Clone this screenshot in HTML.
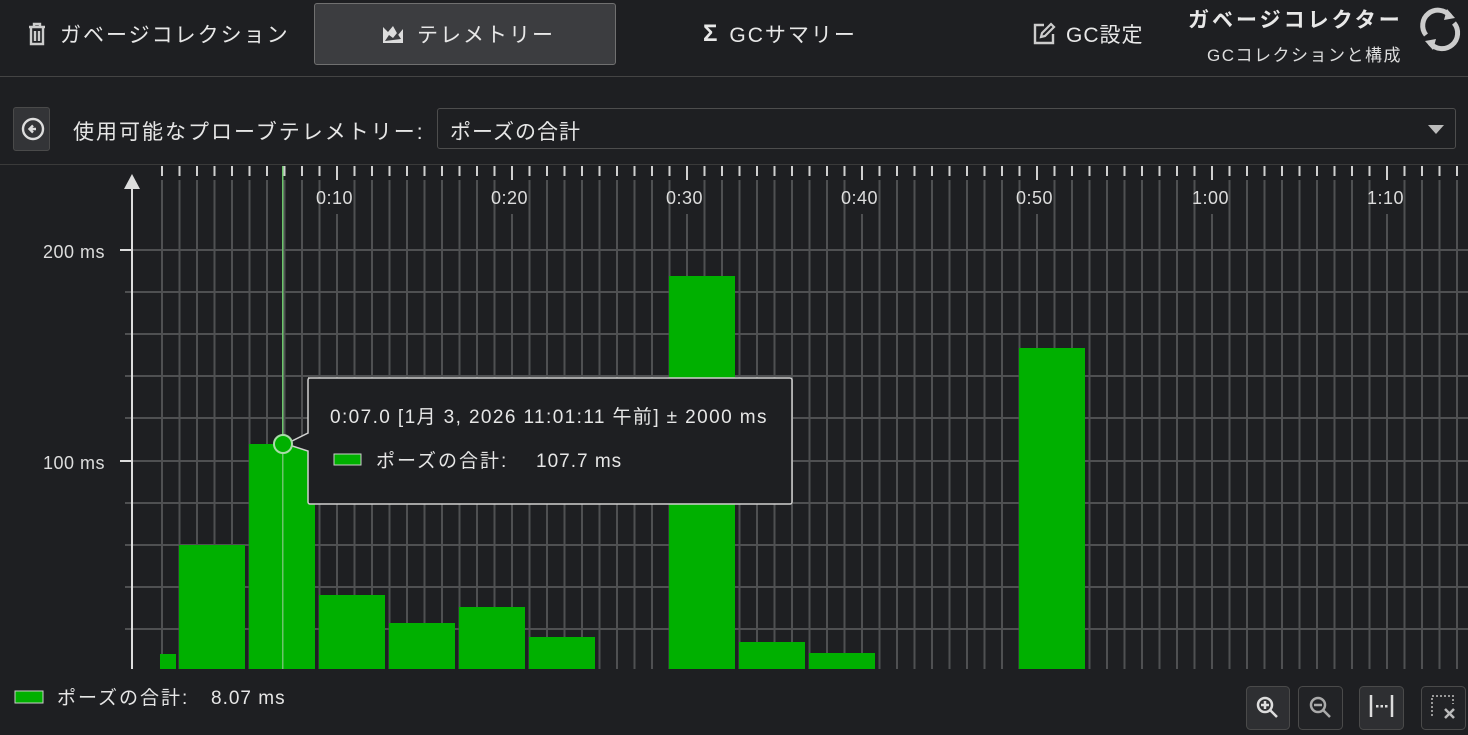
<!DOCTYPE html>
<html><head><meta charset="utf-8"><style>
*{margin:0;padding:0;box-sizing:border-box}
body{width:1468px;height:735px;background:#1e1f22;color:#e6e6e6;font-family:"Liberation Sans","Noto Sans CJK JP",sans-serif;overflow:hidden;position:relative}
.a{position:absolute}
.tab{position:absolute;top:0;height:68px;display:flex;align-items:center;font-size:21px;color:#e8e8e8;letter-spacing:2px}
</style></head><body>
<div class="tab" style="left:26px">
<svg width="22" height="24" viewBox="0 0 22 24" style="margin-right:12px"><path d="M3 5h16M8 5V2h6v3M5 5v17h12V5M9 9v10M13 9v10" stroke="#ccc" stroke-width="2.4" fill="none"/></svg>ガベージコレクション</div>
<div class="a" style="left:314px;top:3px;width:302px;height:62px;background:#3c3d40;border:1px solid #707070;border-radius:3px"></div>
<div class="tab" style="left:381px">
<svg width="24" height="22" viewBox="0 0 24 22" style="margin-right:12px"><path d="M2 4v16h20V6l-5 6-5-9-5 6z" fill="#ddd"/><path d="M4 18l4-6 4 3 4-5 4 6z" fill="#3c3d40"/></svg>テレメトリー</div>
<div class="tab" style="left:703px"><span style="font-size:24px;margin-right:10px;font-weight:bold">Σ</span>GCサマリー</div>
<div class="tab" style="left:1032px;letter-spacing:1px">
<svg width="24" height="24" viewBox="0 0 24 24" style="margin-right:10px"><path d="M12 3H3v18h18v-9" stroke="#ccc" stroke-width="2.4" fill="none"/><path d="M9 15l1-4 9-9 3 3-9 9z" stroke="#ccc" stroke-width="2.2" fill="none"/></svg>GC設定</div>
<div class="a" style="left:1188px;top:4px;font-size:21px;font-weight:bold;color:#e8e8e8;letter-spacing:3px">ガベージコレクター</div>
<div class="a" style="left:1207px;top:41px;font-size:17px;color:#ddd;letter-spacing:1.5px">GCコレクションと構成</div>
<svg class="a" style="left:1416px;top:5px" width="48" height="48" viewBox="0 0 48 48"><path d="M10 30A15 15 0 0 1 34 11" stroke="#ccc" stroke-width="5" fill="none"/><path d="M31 4l8 9-11 2z" fill="#ccc"/><path d="M38 18A15 15 0 0 1 14 38" stroke="#ccc" stroke-width="5" fill="none"/><path d="M17 45l-8-9 11-2z" fill="#ccc"/></svg>
<div class="a" style="left:0;top:76px;width:1468px;height:1px;background:#444"></div>
<div class="a" style="left:13px;top:107px;width:37px;height:44px;background:#333437;border:1px solid #4a4a4a;border-radius:3px"></div>
<svg class="a" style="left:21px;top:117px" width="24" height="24" viewBox="0 0 24 24"><circle cx="12" cy="12" r="10" stroke="#ddd" stroke-width="2.4" fill="none"/><path d="M15 12H9M12 8.5L8.5 12 12 15.5" stroke="#ddd" stroke-width="2.4" fill="none"/></svg>
<div class="a" style="left:73px;top:116px;font-size:21px;letter-spacing:2px">使用可能なプローブテレメトリー:</div>
<div class="a" style="left:437px;top:108px;width:1019px;height:41px;border:1px solid #4d4d4d;border-radius:3px"></div>
<div class="a" style="left:450px;top:116px;font-size:21px;letter-spacing:1px">ポーズの合計</div>
<svg class="a" style="left:1428px;top:125px" width="16" height="10"><path d="M0 0h16L8 9z" fill="#bbb"/></svg>
<div class="a" style="left:0;top:164px;width:1468px;height:1px;background:#3a3a3a"></div>
<svg class="a" style="left:0;top:0" width="1468" height="735">
<defs>
<pattern id="v" x="161" y="0" width="17.5" height="735" patternUnits="userSpaceOnUse"><rect x="0" y="0" width="2" height="735" fill="#4f5052"/></pattern>
<pattern id="t" x="161" y="0" width="17.5" height="735" patternUnits="userSpaceOnUse"><rect x="0" y="0" width="2" height="735" fill="#cfcfcf"/></pattern>
</defs>
<rect x="160" y="180" width="1308" height="489" fill="url(#v)"/>
<rect x="160" y="166" width="1308" height="10" fill="url(#t)"/>
<g fill="#1e1f22"><rect x="329" y="180" width="20" height="34"/><rect x="504" y="180" width="20" height="34"/><rect x="679" y="180" width="20" height="34"/><rect x="854" y="180" width="20" height="34"/><rect x="1029" y="180" width="20" height="34"/><rect x="1204" y="180" width="20" height="34"/><rect x="1379" y="180" width="20" height="34"/></g>
<g fill="#4f5052"><rect x="336" y="215" width="2" height="454"/><rect x="511" y="215" width="2" height="454"/><rect x="686" y="215" width="2" height="454"/><rect x="861" y="215" width="2" height="454"/><rect x="1036" y="215" width="2" height="454"/><rect x="1211" y="215" width="2" height="454"/><rect x="1386" y="215" width="2" height="454"/></g>
<g fill="#cfcfcf"><rect x="336" y="166" width="2" height="14"/><rect x="511" y="166" width="2" height="14"/><rect x="686" y="166" width="2" height="14"/><rect x="861" y="166" width="2" height="14"/><rect x="1036" y="166" width="2" height="14"/><rect x="1211" y="166" width="2" height="14"/><rect x="1386" y="166" width="2" height="14"/></g>
<g fill="#4f5052"><rect x="125" y="249" width="1343" height="2"/><rect x="125" y="291" width="1343" height="2"/><rect x="125" y="333" width="1343" height="2"/><rect x="125" y="375" width="1343" height="2"/><rect x="125" y="417" width="1343" height="2"/><rect x="125" y="460" width="1343" height="2"/><rect x="125" y="502" width="1343" height="2"/><rect x="125" y="544" width="1343" height="2"/><rect x="125" y="586" width="1343" height="2"/><rect x="125" y="628" width="1343" height="2"/></g>
<rect x="120" y="249" width="12" height="2" fill="#ddd"/><rect x="120" y="460" width="12" height="2" fill="#ddd"/>
<rect x="131" y="186" width="2" height="483" fill="#ddd"/><path d="M124 189h16l-8-15z" fill="#ddd"/>
<g font-size="18" fill="#ddd" font-family="Liberation Sans,sans-serif" letter-spacing="0.5"><text x="316" y="204">0:10</text><text x="491" y="204">0:20</text><text x="666" y="204">0:30</text><text x="841" y="204">0:40</text><text x="1016" y="204">0:50</text><text x="1192" y="204">1:00</text><text x="1367" y="204">1:10</text>
<text x="43" y="258">200 ms</text><text x="43" y="469">100 ms</text></g>
<g fill="#00b000"><rect x="160" y="654" width="16" height="15"/><rect x="179" y="545" width="66" height="124"/><rect x="249" y="444" width="66" height="225"/><rect x="319" y="595" width="66" height="74"/><rect x="389" y="623" width="66" height="46"/><rect x="459" y="607" width="66" height="62"/><rect x="529" y="637" width="66" height="32"/><rect x="669" y="276" width="66" height="393"/><rect x="739" y="642" width="66" height="27"/><rect x="809" y="653" width="66" height="16"/><rect x="1019" y="348" width="66" height="321"/></g>
<rect x="282" y="166" width="1.5" height="503" fill="#6cc46c"/>
<path d="M308 378h482a2 2 0 0 1 2 2v122a2 2 0 0 1-2 2H310a2 2 0 0 1-2-2V451l-22-7 22-11V380a2 2 0 0 1 2-2z" fill="#1e1f22" stroke="#d0d0d0" stroke-width="1.5"/>
<circle cx="283" cy="444" r="9" fill="#00b000" stroke="#a8dca8" stroke-width="2"/>
<rect x="334" y="454" width="27" height="11" fill="#00b000" stroke="#ccc" stroke-width="1"/>
<g fill="#e6e6e6" font-size="19" font-family="Liberation Sans,Noto Sans CJK JP,sans-serif"><text x="330" y="423" letter-spacing="1.4">0:07.0 [1月 3, 2026 11:01:11 午前] ± 2000 ms</text><text x="376" y="467" letter-spacing="2">ポーズの合計:</text><text x="536" y="467" letter-spacing="1">107.7 ms</text></g>
<rect x="15" y="691" width="28" height="12" fill="#00b000" stroke="#ccc" stroke-width="1"/>
<g font-size="19" fill="#e6e6e6" font-family="Liberation Sans,Noto Sans CJK JP,sans-serif"><text x="57" y="704" letter-spacing="2">ポーズの合計:</text><text x="211" y="704" letter-spacing="1">8.07 ms</text></g>
<g stroke="#4a4a4a" fill="#2e2f32"><rect x="1246.5" y="686.5" width="43" height="43" rx="4"/><rect x="1298.5" y="686.5" width="44" height="43" rx="4" fill="#222326"/><rect x="1359.5" y="686.5" width="44" height="43" rx="4"/><rect x="1421.5" y="686.5" width="44" height="43" rx="4" fill="#222326"/></g>
<g stroke="#ddd" stroke-width="2.5" fill="none"><circle cx="1265" cy="705" r="7"/><path d="M1270 710l7 7M1265 701v8M1261 705h8"/></g>
<g stroke="#aaa" stroke-width="2.5" fill="none"><circle cx="1318" cy="705" r="7"/><path d="M1323 710l7 7M1314 705h8"/></g>
<g stroke="#ddd" stroke-width="2.5" fill="none"><path d="M1371 695v22M1392 695v22"/></g><g fill="#ddd"><rect x="1376" y="705" width="2.5" height="2.5"/><rect x="1380.5" y="705" width="2.5" height="2.5"/><rect x="1385" y="705" width="2.5" height="2.5"/></g>
<g stroke="#999" stroke-width="2" fill="none" stroke-dasharray="2 2"><path d="M1432 716v-20h21v8"/></g><g stroke="#bbb" stroke-width="2.5"><path d="M1445 709l9 9M1454 709l-9 9"/></g>
</svg>
</body></html>
